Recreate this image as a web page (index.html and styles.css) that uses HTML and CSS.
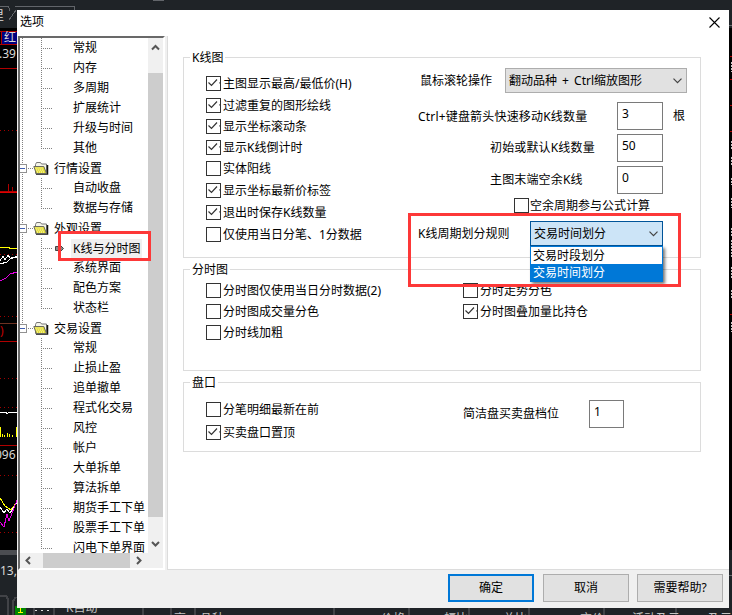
FILE: index.html
```
<!DOCTYPE html>
<html lang="zh-CN">
<head>
<meta charset="utf-8">
<title>选项</title>
<link rel="stylesheet" href="styles.css">
</head>
<body>
<div class="desktop">
  <svg class="backdrop" width="732" height="615" viewBox="0 0 732 615" shape-rendering="crispEdges">
    <rect width="732" height="615" fill="#1f2327"/>
    <path d="M153 0h11M0 6h8l1 2v3M9 20l7-10M15 6h59l1 4" fill="none" stroke="#62656a"/>
    <rect y="28" width="17" height="522" fill="#000"/>
    <rect y="550" width="17" height="5" fill="#4b4d51"/>
    <rect x="1" y="32" width="16" height="12" fill="#000080"/>
    <path d="M0 31.5h17M0 44.5h17M1.500 32v12M0 68.500h17M0 191h17M8 191v-7M12 191v-4M0 341.500h17M0 445.500h17" stroke="#b00000"/>
    <path d="M0 192h17" stroke="#e00000"/>
    <path d="M0 130.500h17M0 254.500h17M0 316.500h17M0 378.500h17M0 407.500h17M0 475.500h17M0 532.500h17" stroke="#a00000" stroke-dasharray="1 3"/>
    <path d="M0 323.500h17" stroke="#6d3222"/>
    <path d="M0 247.500h9v1h8M0 427v10M2.500 434v3M4.500 435v2M7.500 433v4M9.500 434v3M12.500 435v2M16.500 427v10M0 498l5 8 6 4 6-8" fill="none" stroke="#ff0"/>
    <path d="M0 261l3-5 2 4 3-5 3 4 6-3M0 264l7-2 4-4 6-1M0 412h6l1 2 2-2h8M0 507l4 6 3-4 3 4 7-11" fill="none" stroke="#fff"/>
    <path d="M0 281l6-3 4-4 7-2M0 522l4 5 3-13 2 7 5-13 3-8" fill="none" stroke="#e000e0"/>
    <text x="-8" y="20" class="bg-text">里</text>
    <text x="4" y="42" class="bg-text">红</text>
    <text x="-1" y="58" class="bg-text">.39</text>
    <text x="-5" y="459" class="bg-text">096</text>
    <text x="0" y="335" class="bg-text bg-red">)</text>
    <text x="0" y="575" class="bg-text">13,</text>
    <path d="M0 596h6l2 3v16M13 615v-14l3-4M34 608v7M54 608v7M143 608v7M171 608v7M195 608v7M334 608v7M409 608v7M469 608v7M529 608v7M604 608v7M676 608v7" fill="none" stroke="#414347" stroke-width="2"/>
    <rect x="15" y="606" width="11" height="9" fill="#008600"/>
    <path d="M20.500 608v4M18 612h5" stroke="#ff0"/>
    <path d="M35 610.500h15" stroke="#ddd" stroke-dasharray="2 4"/>
    <g class="bg-bottom">
      <text x="66" y="612">K自动</text><text x="174" y="623">高</text><text x="200" y="623">品种</text>
      <text x="381" y="623">价格</text><text x="444" y="623">幅比</text><text x="503" y="623">总比</text>
      <text x="580" y="623">方价</text><text x="632" y="623">活动及示</text><text x="708" y="623">及示</text>
    </g>
    <rect x="729" y="28" width="3" height="522" fill="#000"/>
    <path d="M729 25.500h3M729 575.500h3" stroke="#66696d"/>
    <path d="M730 56.500h2M730 79.500h2M730 105.500h2M730 131.500h2M730 314.500h2" stroke="#b00000"/>
    <path d="M731.500 62v10M731.500 141v8M731.500 157v9M731.500 178v7M731.500 198v10M731.500 228v9M731.500 240v17M731.500 267v12M731.500 290v8M731.500 322v10" stroke="#ccc" stroke-dasharray="2 1"/>
  </svg>

  <main class="dialog">
    <header class="titlebar">
      <span>选项</span>
      <svg class="close" width="11" height="11" viewBox="0 0 11 11"><path d="M.5.5l10 10M10.500.5l-10 10"/></svg>
    </header>

    <div class="body">
      <aside class="sidebar">
        <div class="tree">
          <ul class="branch">
            <li>常规</li><li>内存</li><li>多周期</li><li>扩展统计</li><li>升级与时间</li><li>其他</li>
          </ul>
          <div class="folder"><i class="minus"></i><svg width="16" height="14"><use href="#folder"/></svg>行情设置</div>
          <ul class="branch"><li>自动收盘</li><li>数据与存储</li></ul>
          <div class="folder"><i class="minus"></i><svg width="16" height="14"><use href="#folder"/></svg>外观设置</div>
          <ul class="branch">
            <li class="current"><svg class="hand" width="9" height="7" viewBox="0 0 9 7"><path d="M.5 1.500h5v-1l3 3-3 3v-1h-5z" fill="#888" stroke="#444"/></svg><span>K线与分时图</span></li>
            <li>系统界面</li><li>配色方案</li><li>状态栏</li>
          </ul>
          <div class="folder"><i class="minus"></i><svg width="16" height="14"><use href="#folder"/></svg>交易设置</div>
          <ul class="branch">
            <li>常规</li><li>止损止盈</li><li>追单撤单</li><li>程式化交易</li><li>风控</li><li>帐户</li><li>大单拆单</li><li>算法拆单</li><li>期货手工下单</li><li>股票手工下单</li><li>闪电下单界面</li>
          </ul>
        </div>
        <div class="vscroll">
          <svg width="15" height="35" viewBox="0 0 15 35"><path d="M4 11.500l3.500-3.500 3.500 3.500"/></svg>
          <div class="thumb"></div>
          <svg width="15" height="36" viewBox="0 0 15 36"><path d="M4 25l3.500 3.500L11 25"/></svg>
        </div>
        <div class="hscroll">
          <svg width="23" height="15" viewBox="0 0 23 15"><path d="M10 4L6.500 7.500 10 11"/></svg>
          <div class="thumb"></div>
          <svg width="33" height="15" viewBox="0 0 33 15"><path d="M7 4l3.500 3.500L7 11"/></svg>
        </div>
      </aside>

      <section class="panel">
        <fieldset class="group group-k">
          <legend>K线图</legend>
          <div class="checks checks-k">
            <label class="check on"><span>主图显示最高/最低价(H)</span></label>
            <label class="check on"><span>过滤重复的图形绘线</span></label>
            <label class="check on"><span>显示坐标滚动条</span></label>
            <label class="check on"><span>显示K线倒计时</span></label>
            <label class="check"><span>实体阳线</span></label>
            <label class="check on"><span>显示坐标最新价标签</span></label>
            <label class="check on"><span>退出时保存K线数量</span></label>
            <label class="check"><span>仅使用当日分笔、1分数据</span></label>
          </div>
          <div class="fields">
            <div class="field wheel"><span class="name">鼠标滚轮操作</span>
              <div class="select"><span>翻动品种 + Ctrl缩放图形</span><svg width="9" height="6"><path d="M.5.7l4 4 4-4"/></svg></div></div>
            <div class="field"><span class="name long">Ctrl+键盘箭头快速移动K线数量</span><div class="input">3</div><span class="unit">根</span></div>
            <div class="field"><span class="name inset">初始或默认K线数量</span><div class="input">50</div></div>
            <div class="field"><span class="name inset">主图末端空余K线</span><div class="input">0</div></div>
            <label class="check join"><span>空余周期参与公式计算</span></label>
            <div class="field rule"><span class="name">K线周期划分规则</span>
              <div class="select open"><span>交易时间划分</span><svg width="9" height="6"><path d="M.5.7l4 4 4-4"/></svg>
                <div class="menu"><div>交易时段划分</div><div class="picked">交易时间划分</div></div>
              </div></div>
          </div>
        </fieldset>

        <fieldset class="group group-t">
          <legend>分时图</legend>
          <div class="checks checks-t">
            <label class="check"><span>分时图仅使用当日分时数据(2)</span></label>
            <label class="check"><span>分时图成交量分色</span></label>
            <label class="check"><span>分时线加粗</span></label>
          </div>
          <div class="checks checks-t">
            <label class="check"><span>分时走势分色</span></label>
            <label class="check on"><span>分时图叠加量比持仓</span></label>
          </div>
        </fieldset>

        <fieldset class="group group-p">
          <legend>盘口</legend>
          <div class="checks checks-p">
            <label class="check"><span>分笔明细最新在前</span></label>
            <label class="check on"><span>买卖盘口置顶</span></label>
          </div>
          <div class="field depth"><span class="name">简洁盘买卖盘档位</span><div class="input">1</div></div>
        </fieldset>
      </section>
    </div>

    <footer class="actions">
      <button class="primary">确定</button><button>取消</button><button>需要帮助?</button>
    </footer>
  </main>

  <div class="mark mark-tree"></div>
  <div class="mark mark-rule"></div>
</div>

<svg width="0" height="0" class="defs">
  <symbol id="folder" viewBox="0 0 16 14">
    <path d="M2.500 12.500v-9l1-2h4l1 1.500h5v9.500z" fill="#f4f4e8" stroke="#777"/>
    <path d="M14.500 4v9H3" fill="none" stroke="#111" stroke-width="1.500"/>
    <path d="M.8 5.500h10l2.700 7H3.300z" fill="#e3de35" stroke="#6a6a60"/>
    <path d="M2.500 7h8M3.200 9h8M4 11h8" stroke="#fffbd0" stroke-dasharray="1 1"/>
  </symbol>
</svg>
</body>
</html>
```
FILE: styles.css
```
* { box-sizing: border-box; }

body {
  margin: 0;
  font: 12px/16px "Noto Sans", "Noto Sans CJK SC", sans-serif;
  color: #000;
  overflow: hidden;
}

.desktop { position: relative; width: 732px; height: 615px; overflow: hidden; }
.backdrop { position: absolute; left: 0; top: 0; }
.defs { position: absolute; }
.bg-text { font-size: 12px; fill: #d8d8d8; }
.bg-red { fill: #c00000; }
.bg-bottom { font-size: 12px; fill: #c4c4c4; }

.dialog {
  position: absolute;
  left: 17px;
  top: 10px;
  width: 712px;
  height: 598px;
  display: grid;
  grid-template-rows: 26px 534px 38px;
  background: #f0f0f0;
}

.titlebar {
  display: flex;
  justify-content: space-between;
  align-items: flex-start;
  padding: 4px 9px 0 3px;
  background: #fff;
}
.close { margin-top: 3px; fill: none; stroke: #000; stroke-width: 1.1; }

.body { display: flex; background: #f0f0f0; }

/* Navigation tree */
.sidebar {
  display: grid;
  grid-template: 515px 15px / 128px 15px;
  width: 147px;
  height: 534px;
  margin-left: 1px;
  border: 2px solid;
  border-color: #696969 #fff #fff #696969;
  background: #f0f0f0;
}
.tree {
  overflow: hidden;
  background: repeating-linear-gradient(#808080 0 1px, transparent 1px 2px) 2px 0 / 1px 290px no-repeat #fff;
}
.branch {
  margin: 0;
  padding: 0;
  list-style: none;
  background: repeating-linear-gradient(#808080 0 1px, transparent 1px 2px) 21px 0 / 1px calc(100% - 9px) no-repeat;
}
.branch li {
  height: 20px;
  padding-left: 53px;
  line-height: 19px;
  white-space: nowrap;
  background: repeating-linear-gradient(90deg, #808080 0 1px, transparent 1px 2px) 21px 10px / 11px 1px no-repeat;
}
.branch .current { display: flex; align-items: center; padding-left: 35px; }
.current span { margin-left: 7px; padding: 0 2px; background: #f0f0f0; }
.folder {
  display: flex;
  align-items: center;
  height: 20px;
  line-height: 19px;
  white-space: nowrap;
  background: repeating-linear-gradient(90deg, #808080 0 1px, transparent 1px 2px) 8px 10px / 6px 1px no-repeat;
}
.folder svg { margin: 0 5px 0 6px; }
.minus {
  width: 7px;
  height: 9px;
  border: 1px solid #919191;
  border-left: 0;
  background: linear-gradient(#3f5db0, #3f5db0) 0 3px / 5px 1px no-repeat #fff;
}

.vscroll { display: flex; flex-direction: column; }
.hscroll { display: flex; grid-column: span 2; }
.vscroll svg, .hscroll svg { flex: none; fill: none; stroke: #555; stroke-width: 2; }
.thumb { flex: 1; background: #cdcdcd; }

/* Settings page */
.panel {
  width: 562px;
  margin-left: 2px;
  padding: 13px 0 0 15px;
  border: solid #dcdcdc;
  border-width: 0 0 1px 1px;
  background: #fff;
}
.group {
  display: flex;
  width: 518px;
  min-width: 0;
  margin: 0;
  padding: 0;
  border: 1px solid #dcdcdc;
}
.group legend { height: 17px; margin-left: 6px; padding: 0 2px; line-height: 17px; }
.group-k { height: 209px; }
.group-t { height: 110px; margin-top: 3px; }
.group-p { height: 78px; margin-top: 3px; }

.checks { display: grid; align-content: start; white-space: nowrap; }
.checks-k { width: 226px; padding: 6px 0 0 22px; grid-template-rows: 22px 22px 21px 21px 21px 22px 22px 22px; }
.checks-t { width: 257px; padding: 2px 0 0 22px; grid-auto-rows: 21px; }
.checks-p { width: 279px; padding: 7px 0 0 22px; grid-auto-rows: 23px; }

.check { display: flex; align-items: center; gap: 2px; }
.check::before {
  content: "";
  flex: none;
  width: 13px;
  height: 13px;
  border: 1px solid #333;
  background: #fff;
}
.check.on::before {
  background: url("data:image/svg+xml,%3Csvg xmlns='http://www.w3.org/2000/svg' width='11' height='11'%3E%3Cpath d='M1.500 5.500l3 3 5.500-6' fill='none' stroke='%23333' stroke-width='1.200'/%3E%3C/svg%3E");
}
.checks-k .check span { padding-top: 1px; }

.fields { width: 290px; padding-top: 2px; }
.field { display: flex; align-items: center; height: 28px; margin-bottom: 4px; white-space: nowrap; }
.name { width: 199px; margin-left: 8px; flex: none; }
.long { letter-spacing: .18px; padding-top: 1px; }
.inset { padding-left: 72px; letter-spacing: .15px; }
.unit { margin-left: 10px; }
.input { width: 46px; height: 28px; padding: 3px 4px; border: 1px solid #7a7a7a; background: #fff; }
.wheel { height: 25px; margin-bottom: 9px; }
.wheel .name { width: 85px; margin-left: 10px; }
.wheel .select span { word-spacing: 2px; }
.select {
  position: relative;
  display: flex;
  justify-content: space-between;
  align-items: center;
  width: 182px;
  height: 25px;
  padding: 0 4px 0 3px;
  border: 1px solid #adadad;
  background: #e1e1e1;
}
.select svg { fill: none; stroke: #444; stroke-width: 1.200; }
.join { height: 13px; margin: 5px 0 9px 104px; }
.join span { margin-left: -1px; }
.rule { height: 25px; margin: 0; }
.rule .name { width: 112px; }
.open { width: 133px; border-color: #005499; background: #cce4f7; }
.menu {
  position: absolute;
  left: -1px;
  top: 24px;
  z-index: 1;
  width: 133px;
  height: 36px;
  border: 1px solid #0078d7;
  background: #fff;
  box-shadow: 2px 2px 3px rgba(0, 0, 0, .55);
  line-height: 17px;
}
.menu div { height: 17px; padding-left: 2px; }
.menu .picked { color: #fff; background: #0078d7; }
.depth { height: 28px; margin-top: 9px; }
.depth .name { width: 126px; margin-left: 0; }
.depth .input { width: 35px; }

.actions { display: flex; justify-content: flex-end; gap: 8px; padding: 4px 6px 0 0; }
.actions button {
  width: 86px;
  height: 28px;
  padding: 0;
  border: 1px solid #adadad;
  background: #e1e1e1;
  font: inherit;
  color: #000;
}
.actions .primary { margin-right: 1px; border: 2px solid #0078d7; }

/* Highlight frames */
.mark { position: absolute; z-index: 2; border: 3px solid #fd3838; }
.mark-tree { left: 58px; top: 231px; width: 93px; height: 30px; }
.mark-rule { left: 408px; top: 213px; width: 273px; height: 74px; }
```
